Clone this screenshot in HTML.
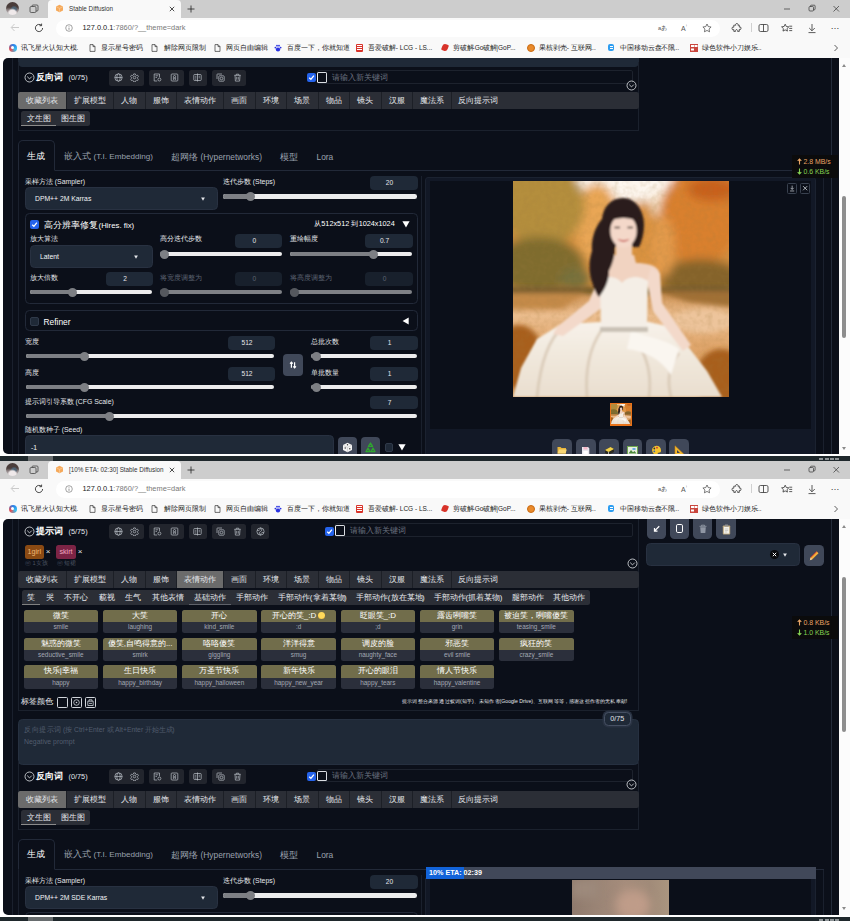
<!DOCTYPE html><html><head><meta charset="utf-8"><title>Stable Diffusion</title><style>
*{box-sizing:border-box;margin:0;padding:0}
html,body{width:850px;height:921px;overflow:hidden;background:#fff}
body{font-family:"Liberation Sans",sans-serif;color:#fff;position:relative}
.a{position:absolute}
.z{display:inline-block;text-align:justify;text-align-last:justify;text-justify:inter-character;white-space:nowrap;vertical-align:baseline}
.t{position:absolute;white-space:nowrap;line-height:1;transform:translateY(-50%)}
.c{position:absolute;white-space:nowrap;line-height:1;transform:translate(-50%,-50%)}
.win{position:absolute;left:0;width:850px}
.page{position:absolute;left:3px;width:836px;background:#0b0f19;overflow:hidden}
.bm{position:absolute;top:0;height:19px;font-size:6.5px;color:#262626;line-height:19.5px;white-space:nowrap}
.ptab{position:absolute;font-size:8px;color:#e5e7eb;text-align:center;white-space:nowrap}
.num{position:absolute;background:#1f2937;border-radius:4px;color:#e5e7eb;font-size:6.6px;text-align:center;padding-right:8.5px}
.trk{position:absolute;height:4.5px;border-radius:2.3px;background:#ececed}
.trk i{position:absolute;left:0;top:0;height:4.5px;border-radius:2.3px;background:#7d7f84}
.trk b{position:absolute;top:-2.2px;width:9px;height:9px;border-radius:4.5px;background:#7d7f84}
.trk.off{background:#7f8186}.trk.off b,.trk.off i{background:#55585e}
.lbl{position:absolute;font-size:7.8px;color:#e5e7eb;white-space:nowrap;line-height:1;transform:translateY(-50%)}
.lbl span{font-size:6.9px}
.dim{color:#5d6472}
.btn{position:absolute;background:#404859;border-radius:4px}
.card{position:absolute;width:74.5px;height:23.5px;border-radius:2.5px;overflow:hidden;background:#2b2f3b}
.card u{position:absolute;left:0;top:0;width:74.5px;height:12.5px;background:#716d4b;color:#fff;font-size:8px;line-height:12.5px;text-align:center;text-decoration:none;white-space:nowrap;overflow:hidden}
.card s{position:absolute;left:0;top:12.5px;width:74.5px;height:11px;color:#a3a8b3;font-size:6.4px;line-height:10.5px;text-align:center;text-decoration:none;white-space:nowrap}
</style></head><body><div class="win" style="top:0px;height:58px"><div class="a" style="left:0;top:0;width:850px;height:18px;background:#cdcdcd"></div><div class="a" style="left:5.5px;top:2px;width:13px;height:13px;border-radius:7px;background:radial-gradient(circle at 50% 88%,#efe9ea 0 26%,rgba(239,233,234,0) 40%),radial-gradient(circle at 62% 55%,#4f6475 0 18%,rgba(79,100,117,0) 34%),linear-gradient(#4a3d3b 0 40%,#8a7f80 60%,#d9d2d2 100%)"></div><svg class="a" style="left:29px;top:4px" width="10" height="10" viewBox="0 0 10 10"><rect x="1" y="2.500" width="6" height="6" rx="1.200" fill="none" stroke="#444" stroke-width=".8"/><path d="M3 2.500V2a1 1 0 0 1 1-1h4a1 1 0 0 1 1 1v4a1 1 0 0 1-1 1h-1" fill="none" stroke="#444" stroke-width=".8"/></svg><div class="a" style="left:48px;top:0;width:133px;height:18px;background:#f9f9f9;border-radius:4px 4px 0 0"></div><svg class="a" style="left:54.500px;top:4px" width="9" height="9" viewBox="0 0 9 9"><path d="M4.500 .8 8 2.600v3.800L4.500 8.200 1 6.400V2.600z" fill="#f5a95b"/><path d="M1 2.600 4.500 4.400 8 2.600M4.500 4.400v3.800" stroke="#fbd3a6" stroke-width=".6" fill="none"/></svg><div class="t" style="left:69px;top:8.800px;font-size:6.300px;color:#333">Stable Diffusion</div><svg class="a" style="left:169px;top:6px" width="6" height="6" viewBox="0 0 6 6"><path d="M.8.8l4.400 4.400M5.200.8.8 5.200" stroke="#222" stroke-width=".8"/></svg><svg class="a" style="left:187px;top:4.500px" width="8" height="8" viewBox="0 0 8 8"><path d="M4 .5v7M.5 4h7" stroke="#222" stroke-width=".8"/></svg><svg class="a" style="left:783px;top:4px" width="60" height="10" viewBox="0 0 60 10"><path d="M1 5h6" stroke="#333" stroke-width=".7"/><rect x="26" y="2.500" width="4.500" height="4.500" rx="1" fill="none" stroke="#333" stroke-width=".7"/><path d="M27.500 2.500V2a.8.8 0 0 1 .8-.8h3a.8.8 0 0 1 .8.8v3a.8.8 0 0 1-.8.8h-.8" fill="none" stroke="#333" stroke-width=".7"/><path d="M50.500 2l5.500 5.500M56 2l-5.500 5.500" stroke="#333" stroke-width=".7"/></svg><div class="a" style="left:0;top:18px;width:850px;height:20px;background:#f9f9f9"></div><svg class="a" style="left:10px;top:23px" width="10" height="9" viewBox="0 0 10 9"><path d="M9 4.500H1.500M4.500 1 1.200 4.500 4.500 8" fill="none" stroke="#c4c4c4" stroke-width=".9"/></svg><svg class="a" style="left:34px;top:22.500px" width="10" height="10" viewBox="0 0 10 10"><path d="M8.600 5A3.600 3.600 0 1 1 7.400 2.300" fill="none" stroke="#333" stroke-width=".9"/><path d="M7.600.6v2.100H5.500" fill="none" stroke="#333" stroke-width=".9"/></svg><div class="a" style="left:56px;top:19.500px;width:664px;height:17.500px;background:#fff;border-radius:8.700px"></div><svg class="a" style="left:65px;top:24px" width="8" height="8" viewBox="0 0 8 8"><circle cx="4" cy="4" r="3.300" fill="none" stroke="#666" stroke-width=".6"/><path d="M4 3.600v2.200M4 2.200v.6" stroke="#666" stroke-width=".7"/></svg><div class="t" style="left:82.500px;top:28.300px;font-size:7.400px;color:#222">127.0.0.1<span style="color:#777">:7860/?__theme=dark</span></div><div class="t" style="left:658px;top:28.500px;font-size:5.600px;color:#555">a<span class="z" style="width:1em">あ</span></div><div class="t" style="left:681px;top:28px;font-size:7px;color:#555">A<span style="font-size:4px;vertical-align:top">⁾</span></div><svg class="a" style="left:701.500px;top:23px" width="10" height="10" viewBox="0 0 10 10"><path d="M5 1l1.250 2.600 2.850.4-2.050 2 .5 2.800L5 7.450 2.450 8.800l.5-2.800L.9 4l2.850-.4z" fill="none" stroke="#444" stroke-width=".7" stroke-linejoin="round"/></svg><svg class="a" style="left:731px;top:22.500px" width="11" height="11" viewBox="0 0 11 11"><path d="M3.600 2.200h1.200a1.200 1.200 0 1 1 2.100 0h1.400v1.900a1.250 1.250 0 1 1 0 2.300v2H6.600a1.200 1.200 0 1 0-2.100 0H2.800V6.600a1.300 1.300 0 1 1 0-2.400V2.200z" fill="none" stroke="#333" stroke-width=".8"/></svg><div class="a" style="left:750.500px;top:23px;width:1px;height:9px;background:#d0d0d0"></div><svg class="a" style="left:757.500px;top:23px" width="11" height="10" viewBox="0 0 11 10"><rect x="1" y="1.500" width="9" height="7" rx="1.400" fill="none" stroke="#333" stroke-width=".8"/><path d="M5.500 1.500v7" stroke="#333" stroke-width=".8"/></svg><svg class="a" style="left:781px;top:22.500px" width="12" height="11" viewBox="0 0 12 11"><path d="M4.200 1.200l1.100 2.300 2.500.35-1.800 1.750.4 2.500-2.200-1.200L2 8.100l.4-2.500L.6 3.850l2.500-.35z" fill="none" stroke="#333" stroke-width=".8" stroke-linejoin="round"/><path d="M8.200 3.200h3M8.200 5.400h3M8.200 7.600h3" stroke="#333" stroke-width=".8"/></svg><svg class="a" style="left:807px;top:22.500px" width="10" height="11" viewBox="0 0 10 11"><path d="M5 1v6.500M2.200 5 5 7.800 7.800 5M1.500 9.600h7" fill="none" stroke="#333" stroke-width=".8"/></svg><div class="t" style="left:830.500px;top:25.500px;font-size:9px;color:#333;letter-spacing:.2px">…</div><div class="a" style="left:0;top:38px;width:850px;height:20px;background:#f9f9f9"></div><div class="a" style="left:0;top:38px;width:850px;height:19px"><div class="a" style="left:8.500px;top:5.500px;width:8px;height:8px;border-radius:4px;background:conic-gradient(#2b7de9,#35c1f1,#e94f4f,#2b7de9)"></div><div class="a" style="left:11px;top:8px;width:3px;height:3px;border-radius:2px;background:#fff"></div><div class="bm" style="left:21px"><span class="z" style="width:8em">讯飞星火认知大模</span>...</div><svg class="a" style="left:89px;top:5.500px" width="7" height="8" viewBox="0 0 7 8"><path d="M1 .6h3l2 2v4.800H1z" fill="none" stroke="#333" stroke-width=".7"/><path d="M4 .6v2h2" fill="none" stroke="#333" stroke-width=".7"/></svg><div class="bm" style="left:101px"><span class="z" style="width:6em">显示星号密码</span></div><svg class="a" style="left:151px;top:5.500px" width="7" height="8" viewBox="0 0 7 8"><path d="M1 .6h3l2 2v4.800H1z" fill="none" stroke="#333" stroke-width=".7"/><path d="M4 .6v2h2" fill="none" stroke="#333" stroke-width=".7"/></svg><div class="bm" style="left:163.500px"><span class="z" style="width:6em">解除网页限制</span></div><svg class="a" style="left:213.5px;top:5.500px" width="7" height="8" viewBox="0 0 7 8"><path d="M1 .6h3l2 2v4.800H1z" fill="none" stroke="#333" stroke-width=".7"/><path d="M4 .6v2h2" fill="none" stroke="#333" stroke-width=".7"/></svg><div class="bm" style="left:225.500px"><span class="z" style="width:6em">网页自由编辑</span></div><svg class="a" style="left:274px;top:5.500px" width="8" height="8" viewBox="0 0 8 8"><ellipse cx="4" cy="5.500" rx="2.200" ry="1.900" fill="#2932e1"/><circle cx="1.400" cy="3.600" r=".9" fill="#2932e1"/><circle cx="3" cy="1.700" r=".9" fill="#2932e1"/><circle cx="5" cy="1.700" r=".9" fill="#2932e1"/><circle cx="6.600" cy="3.600" r=".9" fill="#2932e1"/></svg><div class="bm" style="left:287px"><span class="z" style="width:9em">百度一下，你就知道</span></div><div class="a" style="left:355.500px;top:5.500px;width:7.500px;height:8px;background:#d8332a;border-radius:1px"></div><div class="a" style="left:357px;top:7px;width:4.500px;height:1px;background:#fff;box-shadow:0 2px #fff,0 4px #fff"></div><div class="bm" style="left:368px"><span class="z" style="width:4em">吾爱破解</span> - LCG - LS...</div><div class="a" style="left:441.500px;top:6px;width:6px;height:7px;background:#d8332a;border-radius:3px 1px 3px 1px;transform:rotate(20deg)"></div><div class="bm" style="left:453px"><span class="z" style="width:3em">剪破解</span>-Go<span class="z" style="width:2em">破解</span>|GoP...</div><div class="a" style="left:526.500px;top:5.500px;width:8px;height:8px;border-radius:4px;background:#e98a2b;border:1px solid #c86a12"></div><div class="bm" style="left:539px"><span class="z" style="width:4em">果核剥壳</span> - <span class="z" style="width:3em">互联网</span>...</div><div class="a" style="left:608px;top:6px;width:6px;height:7px;border-radius:2px;background:#2d9df0"></div><div class="a" style="left:609.500px;top:8px;width:3px;height:1px;background:#fff;box-shadow:0 2px #fff"></div><div class="bm" style="left:619.500px"><span class="z" style="width:6em">中国移动云盘</span>-<span class="z" style="width:2em">不限</span>...</div><div class="a" style="left:690px;top:5.500px;width:8px;height:8px;background:#c9463d"></div><div class="a" style="left:691px;top:6.500px;width:2.500px;height:2.500px;background:#fff;box-shadow:3.500px 0 #fff,0 3.500px #fff"></div><div class="bm" style="left:702px"><span class="z" style="width:4em">绿色软件</span>-<span class="z" style="width:4em">小刀娱乐</span>...</div><svg class="a" style="left:833px;top:5.500px" width="6" height="8" viewBox="0 0 6 8"><path d="M1.500 1 4.500 4 1.500 7" fill="none" stroke="#333" stroke-width=".8"/></svg></div></div><div class="page" style="top:57.7px;height:396px;border-radius:5px 0 0 5px"><div class="a" style="left:8.5px;top:-0.7px;width:1.0px;height:397px;background:#1a202d"></div><div class="a" style="left:820px;top:113.3px;width:1px;height:283px;background:#1a202d"></div><div class="a" style="left:15px;top:113.3px;width:1px;height:283px;background:#1a202d"></div><div class="a" style="left:827.5px;top:-0.7px;width:1.0px;height:397px;background:#232b3a"></div><div class="a" style="left:15px;top:-7.7px;width:621px;height:16.5px;background:#1f2937;border-radius:4.500px"></div><div class="a" style="left:15px;top:4.3px;width:621px;height:69px;border:1px solid #1b212d;border-top:none"></div><svg class="a" style="left:21.0px;top:14.8px" width="11" height="11" viewBox="0 0 11 11"><circle cx="5.500" cy="5.500" r="4.500" fill="none" stroke="#e5e7eb" stroke-width=".8"/><path d="M3.200 4.600 5.500 6.900 7.800 4.600" fill="none" stroke="#e5e7eb" stroke-width=".8"/></svg><div class="t" style="left:32.8px;top:20.6px;font-size:9.200px;font-weight:bold;color:#fff"><span class="z" style="width:3em">反向词</span></div><div class="t" style="left:65.5px;top:20.6px;font-size:7.300px;color:#e5e7eb">(0/75)</div><div class="a" style="left:106px;top:12.6px;width:35px;height:15.5px;background:#22252d;border-radius:2.500px"></div><div class="a" style="left:145.5px;top:12.6px;width:35.5px;height:15.5px;background:#22252d;border-radius:2.500px"></div><div class="a" style="left:185.5px;top:12.6px;width:18.0px;height:15.5px;background:#22252d;border-radius:2.500px"></div><div class="a" style="left:208.5px;top:12.6px;width:34.5px;height:15.5px;background:#22252d;border-radius:2.500px"></div><svg class="a" style="left:110.8px;top:15.8px" width="9" height="9" viewBox="0 0 9 9"><circle cx="4.500" cy="4.500" r="3.700" stroke="#bcc1c9" stroke-width=".7" fill="none"/><ellipse cx="4.500" cy="4.500" rx="1.700" ry="3.700" stroke="#bcc1c9" stroke-width=".7" fill="none"/><path d="M.8 4.500h7.400" stroke="#bcc1c9" stroke-width=".7" fill="none"/></svg><svg class="a" style="left:127.2px;top:15.8px" width="9" height="9" viewBox="0 0 9 9"><circle cx="4.500" cy="4.500" r="1.300" stroke="#bcc1c9" stroke-width=".7" fill="none"/><path d="M3.700.9h1.600l.3 1.100.9.500 1.100-.3.800 1.400-.8.800v1l.8.800-.8 1.400-1.100-.3-.9.500-.3 1.100H3.700l-.3-1.100-.9-.5-1.100.3-.8-1.400.8-.8v-1l-.8-.8.8-1.400 1.100.3.900-.5z" stroke="#bcc1c9" stroke-width=".7" fill="none"/></svg><svg class="a" style="left:150.2px;top:15.8px" width="9" height="9" viewBox="0 0 9 9"><path d="M1.200 1h5.300v3.200M1.200 1v7h3" stroke="#bcc1c9" stroke-width=".7" fill="none"/><path d="M2.500 2.800h2.700M2.500 4.400h1.500" stroke="#bcc1c9" stroke-width=".7" fill="none"/><circle cx="6.400" cy="6.500" r="1.500" stroke="#bcc1c9" stroke-width=".7" fill="none"/></svg><svg class="a" style="left:166.8px;top:15.8px" width="9" height="9" viewBox="0 0 9 9"><rect x="1.200" y="1" width="6.600" height="7" rx=".8" stroke="#bcc1c9" stroke-width=".7" fill="none"/><circle cx="4.500" cy="3.600" r="1.100" stroke="#bcc1c9" stroke-width=".7" fill="none"/><path d="M3.400 4.500v2l1.100-.7 1.100.7v-2" stroke="#bcc1c9" stroke-width=".7" fill="none"/></svg><svg class="a" style="left:190.0px;top:15.8px" width="9" height="9" viewBox="0 0 9 9"><rect x=".8" y="1.500" width="7.400" height="6" rx=".7" stroke="#bcc1c9" stroke-width=".7" fill="none"/><path d="M4.500.5v8M2.200 3.300h1.100M2.200 4.800h1.100M2.200 6.200h1.100M5.700 3.300h1.100M5.700 4.800h1.100" stroke="#bcc1c9" stroke-width=".7" fill="none"/></svg><svg class="a" style="left:212.8px;top:15.8px" width="9" height="9" viewBox="0 0 9 9"><rect x="2.800" y="2.800" width="5.400" height="5.400" rx=".8" stroke="#bcc1c9" stroke-width=".7" fill="none"/><path d="M1 6V1.600A.6.600 0 0 1 1.600 1H6" stroke="#bcc1c9" stroke-width=".7" fill="none"/><circle cx="5.500" cy="5.500" r="1.300" stroke="#bcc1c9" stroke-width=".7" fill="none"/></svg><svg class="a" style="left:229.8px;top:15.8px" width="9" height="9" viewBox="0 0 9 9"><path d="M1.300 2.300h6.400M3.300 2.300V1.200h2.400v1.100M2 2.300l.4 5.800h4.200L7 2.300M3.700 3.800v2.900M5.300 3.800v2.900" stroke="#bcc1c9" stroke-width=".7" fill="none"/></svg><div class="a" style="left:313.5px;top:12.3px;width:316.5px;height:13.6px;border:1px solid #1d222d;border-radius:2px"></div><div class="a" style="left:303.5px;top:15.5px;width:9.0px;height:9.0px;border-radius:2px;background:#2563eb"></div><svg class="a" style="left:303.5px;top:15.5px" width="9" height="9" viewBox="0 0 9 9"><path d="M2.200 4.700 3.900 6.300l3-3.700" fill="none" stroke="#fff" stroke-width="1.300"/></svg><div class="a" style="left:314.1px;top:14.3px;width:10.4px;height:10.8px;border:1px solid #d9dce1;border-left:1.800px solid #f3f4f6;border-radius:1.500px"></div><div class="t" style="left:328.5px;top:20.0px;font-size:7.850px;color:#6b7280"><span class="z" style="width:7em">请输入新关键词</span></div><svg class="a" style="left:623.1px;top:22.6px" width="11" height="11" viewBox="0 0 11 11"><circle cx="5.500" cy="5.500" r="4.500" fill="none" stroke="#e5e7eb" stroke-width=".8"/><path d="M3.200 4.600 5.500 6.900 7.800 4.600" fill="none" stroke="#e5e7eb" stroke-width=".8"/></svg><div class="a" style="left:15px;top:34.5px;width:621px;height:17.0px;background:#2b2e36;border-radius:2.500px"></div><div class="ptab" style="left:15px;top:34.5px;width:47.5px;height:17px;line-height:17.500px;background:#6b6b6b;border-radius:2.500px 0 0 2.500px;"><span class="z" style="width:4em">收藏列表</span></div><div class="ptab" style="left:62.5px;top:34.5px;width:47.5px;height:17px;line-height:17.500px;border-left:1px solid #1c1f26;"><span class="z" style="width:4em">扩展模型</span></div><div class="ptab" style="left:110px;top:34.5px;width:31.5px;height:17px;line-height:17.500px;border-left:1px solid #1c1f26;"><span class="z" style="width:2em">人物</span></div><div class="ptab" style="left:141.5px;top:34.5px;width:31.5px;height:17px;line-height:17.500px;border-left:1px solid #1c1f26;"><span class="z" style="width:2em">服饰</span></div><div class="ptab" style="left:173px;top:34.5px;width:47px;height:17px;line-height:17.500px;border-left:1px solid #1c1f26;"><span class="z" style="width:4em">表情动作</span></div><div class="ptab" style="left:220px;top:34.5px;width:31.5px;height:17px;line-height:17.500px;border-left:1px solid #1c1f26;"><span class="z" style="width:2em">画面</span></div><div class="ptab" style="left:251.5px;top:34.5px;width:31.5px;height:17px;line-height:17.500px;border-left:1px solid #1c1f26;"><span class="z" style="width:2em">环境</span></div><div class="ptab" style="left:283px;top:34.5px;width:31.5px;height:17px;line-height:17.500px;border-left:1px solid #1c1f26;"><span class="z" style="width:2em">场景</span></div><div class="ptab" style="left:314.5px;top:34.5px;width:31.5px;height:17px;line-height:17.500px;border-left:1px solid #1c1f26;"><span class="z" style="width:2em">物品</span></div><div class="ptab" style="left:346px;top:34.5px;width:31.5px;height:17px;line-height:17.500px;border-left:1px solid #1c1f26;"><span class="z" style="width:2em">镜头</span></div><div class="ptab" style="left:377.5px;top:34.5px;width:31.5px;height:17px;line-height:17.500px;border-left:1px solid #1c1f26;"><span class="z" style="width:2em">汉服</span></div><div class="ptab" style="left:409px;top:34.5px;width:39px;height:17px;line-height:17.500px;border-left:1px solid #1c1f26;"><span class="z" style="width:3em">魔法系</span></div><div class="ptab" style="left:448px;top:34.5px;width:52px;height:17px;line-height:17.500px;border-left:1px solid #1c1f26;"><span class="z" style="width:5em">反向提示词</span></div><div class="a" style="left:18px;top:53.3px;width:69px;height:15.5px;background:#2b2e36;border-radius:2.500px"></div><div class="a" style="left:18px;top:67.8px;width:34.5px;height:1.0px;background:#8b8b8b"></div><div class="c" style="left:35.5px;top:61.3px;font-size:7.800px;color:#e5e7eb"><span class="z" style="width:3em">文生图</span></div><div class="c" style="left:70px;top:61.3px;font-size:7.800px;color:#e5e7eb"><span class="z" style="width:3em">图生图</span></div><div class="a" style="left:15px;top:112.5px;width:805.5px;height:1.0px;background:#222938"></div><div class="a" style="left:15px;top:82.8px;width:36.5px;height:30.7px;border:1px solid #222938;border-bottom:1px solid #0b0f19;border-radius:5px 5px 0 0;background:#0b0f19"></div><div class="t" style="left:24px;top:99.0px;font-size:9.200px;color:#fff"><span class="z" style="width:2em">生成</span></div><div class="t" style="left:61px;top:99.0px;font-size:9px;color:#9aa1ad"><span class="z" style="width:3em">嵌入式</span> <span style="font-size:8.100px">(T.I. Embedding)</span></div><div class="t" style="left:168px;top:99.0px;font-size:9px;color:#9aa1ad"><span class="z" style="width:3em">超网络</span> <span style="font-size:8.400px">(Hypernetworks)</span></div><div class="t" style="left:277px;top:99.0px;font-size:9px;color:#9aa1ad"><span class="z" style="width:2em">模型</span></div><div class="t" style="left:313.5px;top:99.0px;font-size:9px;color:#9aa1ad"><span style="font-size:8.400px">Lora</span></div><div class="a" style="left:418px;top:118.3px;width:1px;height:278px;background:#1a202d"></div><div class="lbl" style="left:22px;top:124.8px"><span class="z" style="width:4em">采样方法</span> <span>(Sampler)</span></div><div class="a" style="left:22px;top:129.8px;width:193px;height:23.0px;background:#1f2937;border-radius:4.500px;border:1px solid #283141"></div><div class="t" style="left:32px;top:141.6px;font-size:6.800px;color:#f3f4f6">DPM++ 2M Karras</div><svg class="a" style="left:194px;top:135.6px" width="12" height="12" viewBox="0 0 12 12"><polygon points="4.10,4.57 7.90,4.57 6.00,7.81" fill="#e5e7eb"/></svg><div class="lbl" style="left:220px;top:124.8px"><span class="z" style="width:4em">迭代步数</span> <span>(Steps)</span></div><div class="num" style="left:367px;top:118.3px;width:47.5px;height:14px;line-height:14.6px;">20</div><div class="trk" style="left:220px;top:136.75px;width:193.5px"><i style="width:27px"></i><b style="left:22.5px"></b></div><div class="a" style="left:22px;top:155.3px;width:392.5px;height:90.7px;border:1px solid #222938;border-radius:4.500px"></div><div class="a" style="left:27px;top:162.8px;width:9px;height:9.0px;border-radius:2px;background:#2563eb"></div><svg class="a" style="left:27px;top:162.8px" width="9" height="9" viewBox="0 0 9 9"><path d="M2.200 4.700 3.900 6.300l3-3.700" fill="none" stroke="#fff" stroke-width="1.300"/></svg><div class="t" style="left:41px;top:167.6px;font-size:8.700px;color:#fff"><span class="z" style="width:6em">高分辨率修复</span> <span style="font-size:7.800px">(Hires. fix)</span></div><div class="t" style="left:311px;top:166.1px;font-size:7.300px;color:#fff"><span class="z" style="width:1em">从</span>512x512 <span class="z" style="width:1em">到</span>1024x1024</div><svg class="a" style="left:396.5px;top:160.3px" width="12" height="12" viewBox="0 0 12 12"><polygon points="2.40,3.30 9.60,3.30 6.00,9.42" fill="#fff"/></svg><div class="lbl" style="left:27px;top:181.8px"><span class="z" style="width:4em">放大算法</span></div><div class="a" style="left:27px;top:187.3px;width:122.5px;height:23px;background:#1f2937;border-radius:4.500px;border:1px solid #283141"></div><div class="t" style="left:37px;top:199.1px;font-size:6.800px;color:#f3f4f6">Latent</div><svg class="a" style="left:127px;top:193.1px" width="12" height="12" viewBox="0 0 12 12"><polygon points="4.10,4.57 7.90,4.57 6.00,7.81" fill="#e5e7eb"/></svg><div class="lbl" style="left:157px;top:181.8px"><span class="z" style="width:6em">高分迭代步数</span></div><div class="num" style="left:232px;top:176.8px;width:47px;height:13.5px;line-height:14.1px;">0</div><div class="trk" style="left:157px;top:194.25px;width:121.5px"><i style="width:4px"></i><b style="left:-0.5px"></b></div><div class="lbl" style="left:287px;top:181.8px"><span class="z" style="width:4em">重绘幅度</span></div><div class="num" style="left:362px;top:176.8px;width:47.5px;height:13.5px;line-height:14.1px;">0.7</div><div class="trk" style="left:287px;top:194.25px;width:121.5px"><i style="width:83.7px"></i><b style="left:79.2px"></b></div><div class="lbl" style="left:27px;top:220.3px"><span class="z" style="width:4em">放大倍数</span></div><div class="num" style="left:103px;top:214.8px;width:46.5px;height:13.5px;line-height:14.1px;">2</div><div class="trk" style="left:27px;top:232.05px;width:122px"><i style="width:42px"></i><b style="left:37.5px"></b></div><div class="lbl dim" style="left:157px;top:220.3px"><span class="z" style="width:6em">将宽度调整为</span></div><div class="num" style="left:232px;top:214.8px;width:47px;height:13.5px;line-height:14.1px;background:#18202c;color:#5d6472;">0</div><div class="trk off" style="left:157px;top:232.05px;width:121.5px"><i style="width:4px"></i><b style="left:-0.5px"></b></div><div class="lbl dim" style="left:287px;top:220.3px"><span class="z" style="width:6em">将高度调整为</span></div><div class="num" style="left:362px;top:214.8px;width:47.5px;height:13.5px;line-height:14.1px;background:#18202c;color:#5d6472;">0</div><div class="trk off" style="left:287px;top:232.05px;width:121.5px"><i style="width:4px"></i><b style="left:-0.5px"></b></div><div class="a" style="left:22px;top:252.3px;width:392.5px;height:21.5px;border:1px solid #222938;border-radius:4.500px"></div><div class="a" style="left:27px;top:259.3px;width:9px;height:9px;border-radius:2px;background:#1f2937;border:1px solid #303a4a"></div><div class="t" style="left:40.5px;top:264.0px;font-size:8.400px;color:#fff">Refiner</div><svg class="a" style="left:396.5px;top:257.6px" width="12" height="12" viewBox="0 0 12 12"><polygon points="8.70,2.40 8.70,9.60 2.58,6.00" fill="#fff"/></svg><div class="lbl" style="left:22px;top:284.3px"><span class="z" style="width:2em">宽度</span></div><div class="num" style="left:225px;top:278.8px;width:46.5px;height:13.5px;line-height:14.1px;">512</div><div class="trk" style="left:22.5px;top:296.05px;width:248.5px"><i style="width:59.0px"></i><b style="left:54.5px"></b></div><div class="lbl" style="left:22px;top:315.0px"><span class="z" style="width:2em">高度</span></div><div class="num" style="left:225px;top:309.3px;width:46.5px;height:13.7px;line-height:14.299999999999999px;">512</div><div class="trk" style="left:22.5px;top:327.05px;width:248.5px"><i style="width:59.0px"></i><b style="left:54.5px"></b></div><div class="a" style="left:280px;top:296.8px;width:20px;height:21.5px;background:#404859;border-radius:4px"></div><svg class="a" style="left:286px;top:303.6px" width="8" height="8" viewBox="0 0 10 10"><path d="M3 8.500V1.500M1.300 3.300 3 1.500l1.700 1.800M7 1.500v7M5.300 6.700 7 8.500l1.700-1.800" fill="none" stroke="#fff" stroke-width="1.500"/></svg><div class="lbl" style="left:308px;top:284.3px"><span class="z" style="width:4em">总批次数</span></div><div class="num" style="left:367px;top:278.8px;width:47.5px;height:13.5px;line-height:14.1px;">1</div><div class="trk" style="left:308px;top:296.05px;width:105.5px"><i style="width:5px"></i><b style="left:0.5px"></b></div><div class="lbl" style="left:308px;top:315.0px"><span class="z" style="width:4em">单批数量</span></div><div class="num" style="left:367px;top:309.3px;width:47.5px;height:13.7px;line-height:14.299999999999999px;">1</div><div class="trk" style="left:308px;top:327.05px;width:105.5px"><i style="width:5px"></i><b style="left:0.5px"></b></div><div class="lbl" style="left:22px;top:344.0px"><span class="z" style="width:7em">提示词引导系数</span> <span>(CFG Scale)</span></div><div class="num" style="left:367px;top:338.0px;width:47.5px;height:13.8px;line-height:14.4px;">7</div><div class="trk" style="left:22.5px;top:356.25px;width:391.0px"><i style="width:83.5px"></i><b style="left:79.0px"></b></div><div class="lbl" style="left:22px;top:372.8px"><span class="z" style="width:5em">随机数种子</span> <span>(Seed)</span></div><div class="a" style="left:22px;top:377.8px;width:308.7px;height:26.5px;background:#1f2937;border-radius:4.500px;border:1px solid #283141"></div><div class="t" style="left:28px;top:390.0px;font-size:6.800px;color:#f3f4f6">-1</div><div class="a" style="left:334.5px;top:379.3px;width:19.5px;height:25px;background:#404859;border-radius:4px"></div><div class="a" style="left:357.7px;top:379.3px;width:19.3px;height:25px;background:#404859;border-radius:4px"></div><svg class="a" style="left:339px;top:384.3px" width="11" height="11" viewBox="0 0 11 11"><path d="M5.500.8 10 3.100v4.800L5.500 10.200 1 7.900V3.100z" fill="#f4f4f4"/><path d="M1 3.100 5.500 5.400 10 3.100M5.500 5.400v4.800" stroke="#bbb" stroke-width=".5" fill="none"/><circle cx="3.200" cy="6" r=".7" fill="#333"/><circle cx="7.800" cy="6.800" r=".7" fill="#333"/><circle cx="5.500" cy="2.800" r=".7" fill="#333"/></svg><svg class="a" style="left:362px;top:384.3px" width="11" height="11" viewBox="0 0 11 11"><path d="M5.500 1 7.600 4.400H3.400zM1 9.500l2-3.500 2 3.500zM10 9.500H6l2-3.500z" fill="none" stroke="#2fa52f" stroke-width="1.300" stroke-linejoin="round"/></svg><div class="a" style="left:381.5px;top:385.3px;width:8.5px;height:9px;border-radius:2px;background:#1f2937;border:1px solid #303a4a"></div><svg class="a" style="left:392.5px;top:383.8px" width="12" height="12" viewBox="0 0 12 12"><polygon points="2.40,3.30 9.60,3.30 6.00,9.42" fill="#fff"/></svg><div class="a" style="left:422px;top:119.3px;width:391px;height:283px;background:#121826;border:1px solid #1b2230;border-radius:3px 3px 0 0"></div><div class="a" style="left:427px;top:123.0px;width:381px;height:248.3px;background:#0b0f19"></div><div class="a" style="left:783.5px;top:125.5px;width:10.3px;height:10.4px;border:1px solid #39414f;border-radius:1.500px"></div><div class="a" style="left:796.5px;top:125.5px;width:10.3px;height:10.4px;border:1px solid #39414f;border-radius:1.500px"></div><svg class="a" style="left:783.5px;top:125.5px" width="10.3" height="10.4" viewBox="0 0 10 10"><path d="M5 2.500v3.600M3.500 4.700 5 6.200 6.500 4.700M3 7.700h4" fill="none" stroke="#d1d5db" stroke-width=".7"/></svg><svg class="a" style="left:796.5px;top:125.5px" width="10.3" height="10.4" viewBox="0 0 10 10"><path d="M3 3l4 4M7 3 3 7" fill="none" stroke="#d1d5db" stroke-width=".8"/></svg><svg class="a" style="left:510.2px;top:123.3px" width="216" height="216" viewBox="0 0 216 216"><defs><filter id="b6" x="-20%" y="-20%" width="140%" height="140%"><feGaussianBlur stdDeviation="5"/></filter><filter id="b3" x="-20%" y="-20%" width="140%" height="140%"><feGaussianBlur stdDeviation="2.5"/></filter><filter id="b1" x="-10%" y="-10%" width="120%" height="120%"><feGaussianBlur stdDeviation=".8"/></filter><filter id="nz" x="0" y="0" width="100%" height="100%"><feTurbulence type="fractalNoise" baseFrequency=".18" numOctaves="2" seed="4"/><feColorMatrix values="0 0 0 0 .35  0 0 0 0 .2  0 0 0 0 .05  .9 .9 0 0 -.75"/></filter><clipPath id="pc"><rect width="216" height="216"/></clipPath><linearGradient id="gr" x1="0" y1="0" x2="0" y2="1"><stop offset="0" stop-color="#d09456"/><stop offset=".22" stop-color="#ebbd8e"/><stop offset=".5" stop-color="#e0a66c"/><stop offset="1" stop-color="#cf9150"/></linearGradient><linearGradient id="sk" x1="0" y1="0" x2="0" y2="1"><stop offset="0" stop-color="#f7f2ea"/><stop offset=".5" stop-color="#f0e7db"/><stop offset="1" stop-color="#e9decf"/></linearGradient></defs>
<g id="ph" clip-path="url(#pc)">
<rect width="216" height="216" fill="#d9923f"/>
<g filter="url(#b6)">
<rect x="-10" y="-10" width="236" height="130" fill="#d9923f"/>
<ellipse cx="112" cy="2" rx="52" ry="20" fill="#fdf6ee"/>
<ellipse cx="152" cy="24" rx="14" ry="14" fill="#f5e2c8"/>
<ellipse cx="84" cy="42" rx="22" ry="40" fill="#e9a654"/>
<ellipse cx="30" cy="24" rx="42" ry="42" fill="#b48e3c"/>
<ellipse cx="26" cy="84" rx="46" ry="28" fill="#7f6c2e"/>
<ellipse cx="62" cy="98" rx="16" ry="12" fill="#76703a"/>
<ellipse cx="186" cy="36" rx="40" ry="48" fill="#d9802d"/>
<ellipse cx="200" cy="8" rx="26" ry="12" fill="#c8611d"/>
<ellipse cx="188" cy="98" rx="42" ry="20" fill="#85642c"/>
<ellipse cx="150" cy="66" rx="12" ry="30" fill="#e29a4b"/>
</g>
<rect x="0" y="112" width="216" height="104" fill="url(#gr)"/>
<g filter="url(#b3)">
<rect x="-5" y="106" width="226" height="7" fill="#6e582a"/>
<path d="M-5 112h78l-24 16H-5z" fill="#c48a4a"/>
<path d="M140 110h80v16l-44-5z" fill="#a06f34"/>
<ellipse cx="6" cy="176" rx="24" ry="32" fill="#a85f1c"/>
<ellipse cx="208" cy="198" rx="26" ry="30" fill="#a85f1c"/>
<ellipse cx="190" cy="140" rx="30" ry="12" fill="#edc49b"/>
</g>
<rect width="216" height="216" filter="url(#nz)" opacity=".28"/>
<g filter="url(#b1)">
<path d="M0 216 8 187 24 158 48 143 88 141 136 141 158 146 177 168 194 190 209 216z" fill="url(#sk)"/>
<path d="M50 146c-12 10-22 30-26 70M88 150c-12 18-16 40-14 66M128 168c8 14 10 32 8 48M166 172c-10 12-12 28-8 44" stroke="#d6c6b2" stroke-width="3" fill="none" opacity=".75"/>
<path d="M118 150c16 6 34 8 48 18l-8 26c-10-16-26-24-44-26z" fill="#faf6f0"/>
<path d="M97 74h24l2 8c10 0 20 2 23 8l-2 12-48 2-12-8c2-8 6-12 14-14z" fill="#f1d3c1"/>
<path d="M88 92 76 120 44 146 40 153 50 155 90 126 96 100z" fill="#f3d9ca"/>
<path d="M138 86 147 92 149 122 178 164 170 170 140 130 134 100z" fill="#f3d9ca"/>
<path d="M87 100c8-6 16-5 22 2 6-7 16-8 26-2l-1 48H88z" fill="#f4eee6"/>
<path d="M87 146h48v5H87z" fill="#c9c1b5"/>
<path d="M110 17c-12 0-20 9-21 21-7 8-11 20-10 32-4 12-3 24 1 34 2 6 4 10 6 12 6-8 10-16 10-26 4-8 6-16 6-24h24c3-6 5-14 5-22 0-14-8-27-21-27z" fill="#2b1d1a"/>
<path d="M103 60h16v18h-16z" fill="#f1d3c1"/>
<ellipse cx="110.500" cy="50" rx="13.200" ry="16.500" fill="#f4d8c9"/>
<path d="M96.500 40c-3-16 31-16 28 0-9-4-19-4-28 0z" fill="#2b1d1a"/>
<path d="M123.500 38c3 6 3 14 .5 22 5-4 7-14 5-24z" fill="#2b1d1a"/>
<path d="M104.500 58c3 3.500 9 3.500 12 0-4 1.500-8 1.500-12 0z" fill="#c5544f"/>
<path d="M101.500 46.500h5.500M114.500 46.500h5.500" stroke="#3a2a26" stroke-width="1.500"/>
</g>
</g></svg><div class="a" style="left:606.6px;top:345.3px;width:22.8px;height:23px;background:#e8731a"></div><svg class="a" style="left:608.1px;top:346.8px" width="19.8" height="20" viewBox="0 0 216 216" preserveAspectRatio="none"><use href="#ph"/></svg><div class="a" style="left:549.4px;top:380.9px;width:19.8px;height:23.4px;background:#404859;border-radius:4.500px"></div><div class="a" style="left:572.8px;top:380.9px;width:19.8px;height:23.4px;background:#404859;border-radius:4.500px"></div><div class="a" style="left:596.2px;top:380.9px;width:19.8px;height:23.4px;background:#404859;border-radius:4.500px"></div><div class="a" style="left:619.6px;top:380.9px;width:19.8px;height:23.4px;background:#404859;border-radius:4.500px"></div><div class="a" style="left:643px;top:380.9px;width:19.8px;height:23.4px;background:#404859;border-radius:4.500px"></div><div class="a" style="left:666.4px;top:380.9px;width:19.8px;height:23.4px;background:#404859;border-radius:4.500px"></div><svg class="a" style="left:554.4px;top:388.8px" width="10" height="8" viewBox="0 0 10 8"><path d="M.5 1h3l1 1h4.500v5.500H.5z" fill="#e8b53a"/><path d="M.5 7.500 2 3.500h7.800L8.500 7.500z" fill="#f7d774"/></svg><svg class="a" style="left:578.3px;top:388.3px" width="9" height="9" viewBox="0 0 9 9"><path d="M1 1h6l1.300 1.300V8.500H1z" fill="#e8e8ee"/><rect x="2.500" y="1" width="4" height="2.500" fill="#f4b8c8"/><rect x="2.300" y="5" width="4.500" height="3.500" fill="#fff"/></svg><svg class="a" style="left:600.7px;top:388.3px" width="11" height="9" viewBox="0 0 11 9"><path d="M1 4 6.500 1l3.500 2v3L4.500 9 1 7z" fill="#2a2a22"/><path d="M1 4 6.500 1l3.500 2L4.500 6z" fill="#f2d24b"/><path d="M4.500 6v3" stroke="#fff" stroke-width=".6"/></svg><svg class="a" style="left:624.1px;top:388.8px" width="11" height="9" viewBox="0 0 11 9"><rect x=".5" y=".5" width="10" height="8" fill="#e8efe0" stroke="#6fa84e" stroke-width="1"/><path d="M1.500 7.500 4 4l2 2.200L7.500 5l2 2.500z" fill="#4c8a3a"/><rect x="5.500" y="2" width="3" height="2" fill="#6aa9e0"/></svg><svg class="a" style="left:647.5px;top:387.8px" width="11" height="10" viewBox="0 0 11 10"><path d="M5.500.8a4.700 4.500 0 1 0 .6 9c1-.2.300-1.400.9-2s2.600.4 3-1.600C10.400 3 8.300.8 5.500.8z" fill="#f4c430"/><circle cx="3.300" cy="3.500" r=".9" fill="#333"/><circle cx="6" cy="2.700" r=".9" fill="#c33"/><circle cx="3.300" cy="6.300" r=".9" fill="#36a"/></svg><svg class="a" style="left:671.4px;top:387.8px" width="11" height="10" viewBox="0 0 11 10"><path d="M1 .8 10.200 9.500H1z" fill="#f4b92e" stroke="#c98412" stroke-width=".6"/><path d="M3 5 6 8H3z" fill="#3b4353"/></svg><div class="a" style="left:789px;top:97.5px;width:46px;height:22.5px;background:#0b0b0c"></div><svg class="a" style="left:793.5px;top:100.5px" width="5" height="7" viewBox="0 0 5 7"><path d="M2.500 6.500V1.200M.7 2.900 2.500 1l1.800 1.900" fill="none" stroke="#e9a566" stroke-width="1.100"/></svg><svg class="a" style="left:793.5px;top:110.5px" width="5" height="7" viewBox="0 0 5 7"><path d="M2.500 .5v5.300M.7 4.100 2.500 6l1.800-1.900" fill="none" stroke="#86d353" stroke-width="1.100"/></svg><div class="t" style="left:800.5px;top:104.0px;font-size:6.900px;color:#e9a566">2.8 MB/s</div><div class="t" style="left:800.5px;top:114.2px;font-size:6.900px;color:#86d353">0.6 KB/s</div></div><div class="a" style="left:839px;top:57.700px;width:11px;height:396px;background:#fcfcfc"></div><div class="a" style="left:841.800px;top:61.500px;width:0;height:0;border:2.200px solid transparent;border-bottom:3px solid #8a8a8a"></div><div class="a" style="left:841.800px;top:446.500px;width:0;height:0;border:2.200px solid transparent;border-top:3px solid #8a8a8a"></div><div class="a" style="left:841.500px;top:195.500px;width:4.500px;height:142px;background:#8d8d8d;border-radius:2.200px"></div><div class="a" style="left:0;top:456px;width:850px;height:5px;background:#1f282c"></div><div class="a" style="left:28px;top:456px;width:25px;height:5px;background:#676c6e"></div><div class="a" style="left:819px;top:457.500px;width:4px;height:2px;background:#8d9396;box-shadow:6px 0 #8d9396,11px 0 #8d9396,16px 0 #8d9396"></div><div class="win" style="top:461px;height:58px"><div class="a" style="left:0;top:0;width:850px;height:18px;background:#cdcdcd"></div><div class="a" style="left:5.5px;top:2px;width:13px;height:13px;border-radius:7px;background:radial-gradient(circle at 50% 88%,#efe9ea 0 26%,rgba(239,233,234,0) 40%),radial-gradient(circle at 62% 55%,#4f6475 0 18%,rgba(79,100,117,0) 34%),linear-gradient(#4a3d3b 0 40%,#8a7f80 60%,#d9d2d2 100%)"></div><svg class="a" style="left:29px;top:4px" width="10" height="10" viewBox="0 0 10 10"><rect x="1" y="2.500" width="6" height="6" rx="1.200" fill="none" stroke="#444" stroke-width=".8"/><path d="M3 2.500V2a1 1 0 0 1 1-1h4a1 1 0 0 1 1 1v4a1 1 0 0 1-1 1h-1" fill="none" stroke="#444" stroke-width=".8"/></svg><div class="a" style="left:48px;top:0;width:133px;height:18px;background:#f9f9f9;border-radius:4px 4px 0 0"></div><svg class="a" style="left:54.500px;top:4px" width="9" height="9" viewBox="0 0 9 9"><path d="M4.500 .8 8 2.600v3.800L4.500 8.200 1 6.400V2.600z" fill="#f5a95b"/><path d="M1 2.600 4.500 4.400 8 2.600M4.500 4.400v3.800" stroke="#fbd3a6" stroke-width=".6" fill="none"/></svg><div class="t" style="left:69px;top:8.800px;font-size:6.300px;color:#333">[10% ETA: 02:30] Stable Diffusion</div><svg class="a" style="left:169px;top:6px" width="6" height="6" viewBox="0 0 6 6"><path d="M.8.8l4.400 4.400M5.200.8.8 5.200" stroke="#222" stroke-width=".8"/></svg><svg class="a" style="left:187px;top:4.500px" width="8" height="8" viewBox="0 0 8 8"><path d="M4 .5v7M.5 4h7" stroke="#222" stroke-width=".8"/></svg><svg class="a" style="left:783px;top:4px" width="60" height="10" viewBox="0 0 60 10"><path d="M1 5h6" stroke="#333" stroke-width=".7"/><rect x="26" y="2.500" width="4.500" height="4.500" rx="1" fill="none" stroke="#333" stroke-width=".7"/><path d="M27.500 2.500V2a.8.8 0 0 1 .8-.8h3a.8.8 0 0 1 .8.8v3a.8.8 0 0 1-.8.8h-.8" fill="none" stroke="#333" stroke-width=".7"/><path d="M50.500 2l5.500 5.500M56 2l-5.500 5.500" stroke="#333" stroke-width=".7"/></svg><div class="a" style="left:0;top:18px;width:850px;height:20px;background:#f9f9f9"></div><svg class="a" style="left:10px;top:23px" width="10" height="9" viewBox="0 0 10 9"><path d="M9 4.500H1.500M4.500 1 1.200 4.500 4.500 8" fill="none" stroke="#c4c4c4" stroke-width=".9"/></svg><svg class="a" style="left:34px;top:22.500px" width="10" height="10" viewBox="0 0 10 10"><path d="M8.600 5A3.600 3.600 0 1 1 7.400 2.300" fill="none" stroke="#333" stroke-width=".9"/><path d="M7.600.6v2.100H5.500" fill="none" stroke="#333" stroke-width=".9"/></svg><div class="a" style="left:56px;top:19.500px;width:664px;height:17.500px;background:#fff;border-radius:8.700px"></div><svg class="a" style="left:65px;top:24px" width="8" height="8" viewBox="0 0 8 8"><circle cx="4" cy="4" r="3.300" fill="none" stroke="#666" stroke-width=".6"/><path d="M4 3.600v2.200M4 2.200v.6" stroke="#666" stroke-width=".7"/></svg><div class="t" style="left:82.500px;top:28.300px;font-size:7.400px;color:#222">127.0.0.1<span style="color:#777">:7860/?__theme=dark</span></div><div class="t" style="left:658px;top:28.500px;font-size:5.600px;color:#555">a<span class="z" style="width:1em">あ</span></div><div class="t" style="left:681px;top:28px;font-size:7px;color:#555">A<span style="font-size:4px;vertical-align:top">⁾</span></div><svg class="a" style="left:701.500px;top:23px" width="10" height="10" viewBox="0 0 10 10"><path d="M5 1l1.250 2.600 2.850.4-2.050 2 .5 2.800L5 7.450 2.450 8.800l.5-2.800L.9 4l2.850-.4z" fill="none" stroke="#444" stroke-width=".7" stroke-linejoin="round"/></svg><svg class="a" style="left:731px;top:22.500px" width="11" height="11" viewBox="0 0 11 11"><path d="M3.600 2.200h1.200a1.200 1.200 0 1 1 2.100 0h1.400v1.900a1.250 1.250 0 1 1 0 2.300v2H6.600a1.200 1.200 0 1 0-2.100 0H2.800V6.600a1.300 1.300 0 1 1 0-2.400V2.200z" fill="none" stroke="#333" stroke-width=".8"/></svg><div class="a" style="left:750.500px;top:23px;width:1px;height:9px;background:#d0d0d0"></div><svg class="a" style="left:757.500px;top:23px" width="11" height="10" viewBox="0 0 11 10"><rect x="1" y="1.500" width="9" height="7" rx="1.400" fill="none" stroke="#333" stroke-width=".8"/><path d="M5.500 1.500v7" stroke="#333" stroke-width=".8"/></svg><svg class="a" style="left:781px;top:22.500px" width="12" height="11" viewBox="0 0 12 11"><path d="M4.200 1.200l1.100 2.300 2.500.35-1.800 1.750.4 2.500-2.200-1.200L2 8.100l.4-2.500L.6 3.850l2.500-.35z" fill="none" stroke="#333" stroke-width=".8" stroke-linejoin="round"/><path d="M8.200 3.200h3M8.200 5.400h3M8.200 7.600h3" stroke="#333" stroke-width=".8"/></svg><svg class="a" style="left:807px;top:22.500px" width="10" height="11" viewBox="0 0 10 11"><path d="M5 1v6.500M2.200 5 5 7.800 7.800 5M1.500 9.600h7" fill="none" stroke="#333" stroke-width=".8"/></svg><div class="t" style="left:830.500px;top:25.500px;font-size:9px;color:#333;letter-spacing:.2px">…</div><div class="a" style="left:0;top:38px;width:850px;height:20px;background:#f9f9f9"></div><div class="a" style="left:0;top:38px;width:850px;height:19px"><div class="a" style="left:8.500px;top:5.500px;width:8px;height:8px;border-radius:4px;background:conic-gradient(#2b7de9,#35c1f1,#e94f4f,#2b7de9)"></div><div class="a" style="left:11px;top:8px;width:3px;height:3px;border-radius:2px;background:#fff"></div><div class="bm" style="left:21px"><span class="z" style="width:8em">讯飞星火认知大模</span>...</div><svg class="a" style="left:89px;top:5.500px" width="7" height="8" viewBox="0 0 7 8"><path d="M1 .6h3l2 2v4.800H1z" fill="none" stroke="#333" stroke-width=".7"/><path d="M4 .6v2h2" fill="none" stroke="#333" stroke-width=".7"/></svg><div class="bm" style="left:101px"><span class="z" style="width:6em">显示星号密码</span></div><svg class="a" style="left:151px;top:5.500px" width="7" height="8" viewBox="0 0 7 8"><path d="M1 .6h3l2 2v4.800H1z" fill="none" stroke="#333" stroke-width=".7"/><path d="M4 .6v2h2" fill="none" stroke="#333" stroke-width=".7"/></svg><div class="bm" style="left:163.500px"><span class="z" style="width:6em">解除网页限制</span></div><svg class="a" style="left:213.5px;top:5.500px" width="7" height="8" viewBox="0 0 7 8"><path d="M1 .6h3l2 2v4.800H1z" fill="none" stroke="#333" stroke-width=".7"/><path d="M4 .6v2h2" fill="none" stroke="#333" stroke-width=".7"/></svg><div class="bm" style="left:225.500px"><span class="z" style="width:6em">网页自由编辑</span></div><svg class="a" style="left:274px;top:5.500px" width="8" height="8" viewBox="0 0 8 8"><ellipse cx="4" cy="5.500" rx="2.200" ry="1.900" fill="#2932e1"/><circle cx="1.400" cy="3.600" r=".9" fill="#2932e1"/><circle cx="3" cy="1.700" r=".9" fill="#2932e1"/><circle cx="5" cy="1.700" r=".9" fill="#2932e1"/><circle cx="6.600" cy="3.600" r=".9" fill="#2932e1"/></svg><div class="bm" style="left:287px"><span class="z" style="width:9em">百度一下，你就知道</span></div><div class="a" style="left:355.500px;top:5.500px;width:7.500px;height:8px;background:#d8332a;border-radius:1px"></div><div class="a" style="left:357px;top:7px;width:4.500px;height:1px;background:#fff;box-shadow:0 2px #fff,0 4px #fff"></div><div class="bm" style="left:368px"><span class="z" style="width:4em">吾爱破解</span> - LCG - LS...</div><div class="a" style="left:441.500px;top:6px;width:6px;height:7px;background:#d8332a;border-radius:3px 1px 3px 1px;transform:rotate(20deg)"></div><div class="bm" style="left:453px"><span class="z" style="width:3em">剪破解</span>-Go<span class="z" style="width:2em">破解</span>|GoP...</div><div class="a" style="left:526.500px;top:5.500px;width:8px;height:8px;border-radius:4px;background:#e98a2b;border:1px solid #c86a12"></div><div class="bm" style="left:539px"><span class="z" style="width:4em">果核剥壳</span> - <span class="z" style="width:3em">互联网</span>...</div><div class="a" style="left:608px;top:6px;width:6px;height:7px;border-radius:2px;background:#2d9df0"></div><div class="a" style="left:609.500px;top:8px;width:3px;height:1px;background:#fff;box-shadow:0 2px #fff"></div><div class="bm" style="left:619.500px"><span class="z" style="width:6em">中国移动云盘</span>-<span class="z" style="width:2em">不限</span>...</div><div class="a" style="left:690px;top:5.500px;width:8px;height:8px;background:#c9463d"></div><div class="a" style="left:691px;top:6.500px;width:2.500px;height:2.500px;background:#fff;box-shadow:3.500px 0 #fff,0 3.500px #fff"></div><div class="bm" style="left:702px"><span class="z" style="width:4em">绿色软件</span>-<span class="z" style="width:4em">小刀娱乐</span>...</div><svg class="a" style="left:833px;top:5.500px" width="6" height="8" viewBox="0 0 6 8"><path d="M1.500 1 4.500 4 1.500 7" fill="none" stroke="#333" stroke-width=".8"/></svg></div></div><div class="page" style="top:518.7px;height:396.5px;border-radius:5px 0 0 5px"><div class="a" style="left:8.5px;top:-0.7px;width:1.0px;height:398px;background:#1a202d"></div><div class="a" style="left:820px;top:351.0px;width:1px;height:46.3px;background:#1a202d"></div><div class="a" style="left:15px;top:351.0px;width:1px;height:46.3px;background:#1a202d"></div><div class="a" style="left:827.5px;top:-0.7px;width:1.0px;height:398px;background:#232b3a"></div><div class="a" style="left:15px;top:-18.7px;width:621px;height:210.7px;border:1px solid #1b212d"></div><svg class="a" style="left:21.0px;top:7.3px" width="11" height="11" viewBox="0 0 11 11"><circle cx="5.500" cy="5.500" r="4.500" fill="none" stroke="#e5e7eb" stroke-width=".8"/><path d="M3.200 4.600 5.500 6.900 7.800 4.600" fill="none" stroke="#e5e7eb" stroke-width=".8"/></svg><div class="t" style="left:32.8px;top:13.1px;font-size:9.200px;font-weight:bold;color:#fff"><span class="z" style="width:3em">提示词</span></div><div class="t" style="left:65.5px;top:13.1px;font-size:7.300px;color:#e5e7eb">(5/75)</div><div class="a" style="left:106px;top:5.1px;width:35px;height:15.5px;background:#22252d;border-radius:2.500px"></div><div class="a" style="left:145.5px;top:5.1px;width:35.5px;height:15.5px;background:#22252d;border-radius:2.500px"></div><div class="a" style="left:185.5px;top:5.1px;width:18.0px;height:15.5px;background:#22252d;border-radius:2.500px"></div><div class="a" style="left:208.5px;top:5.1px;width:34.5px;height:15.5px;background:#22252d;border-radius:2.500px"></div><div class="a" style="left:248px;top:5.1px;width:18px;height:15.5px;background:#22252d;border-radius:2.500px"></div><svg class="a" style="left:110.8px;top:8.3px" width="9" height="9" viewBox="0 0 9 9"><circle cx="4.500" cy="4.500" r="3.700" stroke="#bcc1c9" stroke-width=".7" fill="none"/><ellipse cx="4.500" cy="4.500" rx="1.700" ry="3.700" stroke="#bcc1c9" stroke-width=".7" fill="none"/><path d="M.8 4.500h7.400" stroke="#bcc1c9" stroke-width=".7" fill="none"/></svg><svg class="a" style="left:127.2px;top:8.3px" width="9" height="9" viewBox="0 0 9 9"><circle cx="4.500" cy="4.500" r="1.300" stroke="#bcc1c9" stroke-width=".7" fill="none"/><path d="M3.700.9h1.600l.3 1.100.9.500 1.100-.3.800 1.400-.8.800v1l.8.800-.8 1.400-1.100-.3-.9.500-.3 1.100H3.700l-.3-1.100-.9-.5-1.100.3-.8-1.400.8-.8v-1l-.8-.8.8-1.400 1.100.3.900-.5z" stroke="#bcc1c9" stroke-width=".7" fill="none"/></svg><svg class="a" style="left:150.2px;top:8.3px" width="9" height="9" viewBox="0 0 9 9"><path d="M1.200 1h5.300v3.200M1.200 1v7h3" stroke="#bcc1c9" stroke-width=".7" fill="none"/><path d="M2.500 2.800h2.700M2.500 4.400h1.500" stroke="#bcc1c9" stroke-width=".7" fill="none"/><circle cx="6.400" cy="6.500" r="1.500" stroke="#bcc1c9" stroke-width=".7" fill="none"/></svg><svg class="a" style="left:166.8px;top:8.3px" width="9" height="9" viewBox="0 0 9 9"><rect x="1.200" y="1" width="6.600" height="7" rx=".8" stroke="#bcc1c9" stroke-width=".7" fill="none"/><circle cx="4.500" cy="3.600" r="1.100" stroke="#bcc1c9" stroke-width=".7" fill="none"/><path d="M3.400 4.500v2l1.100-.7 1.100.7v-2" stroke="#bcc1c9" stroke-width=".7" fill="none"/></svg><svg class="a" style="left:190.0px;top:8.3px" width="9" height="9" viewBox="0 0 9 9"><rect x=".8" y="1.500" width="7.400" height="6" rx=".7" stroke="#bcc1c9" stroke-width=".7" fill="none"/><path d="M4.500.5v8M2.200 3.300h1.100M2.200 4.800h1.100M2.200 6.200h1.100M5.700 3.300h1.100M5.700 4.800h1.100" stroke="#bcc1c9" stroke-width=".7" fill="none"/></svg><svg class="a" style="left:212.8px;top:8.3px" width="9" height="9" viewBox="0 0 9 9"><rect x="2.800" y="2.800" width="5.400" height="5.400" rx=".8" stroke="#bcc1c9" stroke-width=".7" fill="none"/><path d="M1 6V1.600A.6.600 0 0 1 1.600 1H6" stroke="#bcc1c9" stroke-width=".7" fill="none"/><circle cx="5.500" cy="5.500" r="1.300" stroke="#bcc1c9" stroke-width=".7" fill="none"/></svg><svg class="a" style="left:229.8px;top:8.3px" width="9" height="9" viewBox="0 0 9 9"><path d="M1.300 2.300h6.400M3.300 2.300V1.200h2.400v1.100M2 2.300l.4 5.800h4.200L7 2.300M3.700 3.800v2.900M5.300 3.800v2.900" stroke="#bcc1c9" stroke-width=".7" fill="none"/></svg><svg class="a" style="left:252.5px;top:8.3px" width="9" height="9" viewBox="0 0 9 9"><circle cx="4.500" cy="4.500" r="3.600" stroke="#bcc1c9" stroke-width=".7" fill="none"/><path d="M4.500.9c1.800 1 1.800 2.800 0 3.600s-1.800 2.600 0 3.600M1.100 3.300c1.600.8 2.900.2 3.400-2.400M7.900 5.700c-1.600-.8-2.900-.2-3.400 2.400" stroke="#bcc1c9" stroke-width=".7" fill="none"/></svg><div class="a" style="left:331.5px;top:4.8px;width:298.5px;height:13.6px;border:1px solid #1d222d;border-radius:2px"></div><div class="a" style="left:321.5px;top:8.0px;width:9.0px;height:9.0px;border-radius:2px;background:#2563eb"></div><svg class="a" style="left:321.5px;top:8.0px" width="9" height="9" viewBox="0 0 9 9"><path d="M2.200 4.700 3.900 6.300l3-3.700" fill="none" stroke="#fff" stroke-width="1.300"/></svg><div class="a" style="left:332.1px;top:6.8px;width:10.4px;height:10.8px;border:1px solid #d9dce1;border-left:1.800px solid #f3f4f6;border-radius:1.500px"></div><div class="t" style="left:346.5px;top:12.5px;font-size:7.850px;color:#6b7280"><span class="z" style="width:7em">请输入新关键词</span></div><div class="a" style="left:21.5px;top:26.3px;width:19.5px;height:14px;background:#8a4a13;border-radius:2.500px"></div><div class="c" style="left:31.3px;top:33.6px;font-size:7.200px;color:#f2b774">1girl</div><div class="c" style="left:45px;top:33.6px;font-size:8px;color:#e5e7eb">×</div><div class="a" style="left:53px;top:26.3px;width:20px;height:14px;background:#7c2445;border-radius:2.500px"></div><div class="c" style="left:63px;top:33.6px;font-size:7.200px;color:#f0a7c0">skirt</div><div class="c" style="left:77px;top:33.6px;font-size:8px;color:#e5e7eb">×</div><div class="t" style="left:22px;top:45.0px;font-size:5.800px;color:#4a5261"><span class="z" style="width:1em">㊥</span> 1<span class="z" style="width:2em">女孩</span></div><div class="t" style="left:54px;top:45.0px;font-size:5.800px;color:#4a5261"><span class="z" style="width:1em">㊥</span> <span class="z" style="width:2em">短裙</span></div><svg class="a" style="left:623.5px;top:39.5px" width="11" height="11" viewBox="0 0 11 11"><circle cx="5.500" cy="5.500" r="4.500" fill="none" stroke="#e5e7eb" stroke-width=".8"/><path d="M3.200 4.600 5.500 6.900 7.800 4.600" fill="none" stroke="#e5e7eb" stroke-width=".8"/></svg><div class="a" style="left:15px;top:52.0px;width:621px;height:17.0px;background:#2b2e36;border-radius:2.500px"></div><div class="ptab" style="left:15px;top:52.0px;width:47.5px;height:17px;line-height:17.500px;border-radius:2.500px 0 0 2.500px;"><span class="z" style="width:4em">收藏列表</span></div><div class="ptab" style="left:62.5px;top:52.0px;width:47.5px;height:17px;line-height:17.500px;border-left:1px solid #1c1f26;"><span class="z" style="width:4em">扩展模型</span></div><div class="ptab" style="left:110px;top:52.0px;width:31.5px;height:17px;line-height:17.500px;border-left:1px solid #1c1f26;"><span class="z" style="width:2em">人物</span></div><div class="ptab" style="left:141.5px;top:52.0px;width:31.5px;height:17px;line-height:17.500px;border-left:1px solid #1c1f26;"><span class="z" style="width:2em">服饰</span></div><div class="ptab" style="left:173px;top:52.0px;width:47px;height:17px;line-height:17.500px;background:#6b6b6b;border-left:1px solid #1c1f26;"><span class="z" style="width:4em">表情动作</span></div><div class="ptab" style="left:220px;top:52.0px;width:31.5px;height:17px;line-height:17.500px;border-left:1px solid #1c1f26;"><span class="z" style="width:2em">画面</span></div><div class="ptab" style="left:251.5px;top:52.0px;width:31.5px;height:17px;line-height:17.500px;border-left:1px solid #1c1f26;"><span class="z" style="width:2em">环境</span></div><div class="ptab" style="left:283px;top:52.0px;width:31.5px;height:17px;line-height:17.500px;border-left:1px solid #1c1f26;"><span class="z" style="width:2em">场景</span></div><div class="ptab" style="left:314.5px;top:52.0px;width:31.5px;height:17px;line-height:17.500px;border-left:1px solid #1c1f26;"><span class="z" style="width:2em">物品</span></div><div class="ptab" style="left:346px;top:52.0px;width:31.5px;height:17px;line-height:17.500px;border-left:1px solid #1c1f26;"><span class="z" style="width:2em">镜头</span></div><div class="ptab" style="left:377.5px;top:52.0px;width:31.5px;height:17px;line-height:17.500px;border-left:1px solid #1c1f26;"><span class="z" style="width:2em">汉服</span></div><div class="ptab" style="left:409px;top:52.0px;width:39px;height:17px;line-height:17.500px;border-left:1px solid #1c1f26;"><span class="z" style="width:3em">魔法系</span></div><div class="ptab" style="left:448px;top:52.0px;width:52px;height:17px;line-height:17.500px;border-left:1px solid #1c1f26;"><span class="z" style="width:5em">反向提示词</span></div><div class="a" style="left:18.5px;top:71.1px;width:568.5px;height:15.5px;background:#2b2e36;border-radius:2.500px"></div><div class="ptab" style="left:18.5px;top:71.1px;width:18.5px;height:15.500px;line-height:16px;font-size:7.900px"><span class="z" style="width:1em">笑</span></div><div class="ptab" style="left:37px;top:71.1px;width:19px;height:15.500px;line-height:16px;font-size:7.900px"><span class="z" style="width:1em">哭</span></div><div class="ptab" style="left:56px;top:71.1px;width:34px;height:15.500px;line-height:16px;font-size:7.900px"><span class="z" style="width:3em">不开心</span></div><div class="ptab" style="left:90px;top:71.1px;width:27px;height:15.500px;line-height:16px;font-size:7.900px"><span class="z" style="width:2em">藐视</span></div><div class="ptab" style="left:117px;top:71.1px;width:26.5px;height:15.500px;line-height:16px;font-size:7.900px"><span class="z" style="width:2em">生气</span></div><div class="ptab" style="left:143.5px;top:71.1px;width:42.0px;height:15.500px;line-height:16px;font-size:7.900px"><span class="z" style="width:4em">其他表情</span></div><div class="ptab" style="left:185.5px;top:71.1px;width:42.5px;height:15.500px;line-height:16px;font-size:7.900px"><span class="z" style="width:4em">基础动作</span></div><div class="ptab" style="left:228px;top:71.1px;width:42.5px;height:15.500px;line-height:16px;font-size:7.900px"><span class="z" style="width:4em">手部动作</span></div><div class="ptab" style="left:270.5px;top:71.1px;width:78.0px;height:15.500px;line-height:16px;font-size:7.900px"><span class="z" style="width:4em">手部动作</span>(<span class="z" style="width:4em">拿着某物</span>)</div><div class="ptab" style="left:348.5px;top:71.1px;width:78.0px;height:15.500px;line-height:16px;font-size:7.900px"><span class="z" style="width:4em">手部动作</span>(<span class="z" style="width:4em">放在某地</span>)</div><div class="ptab" style="left:426.5px;top:71.1px;width:77.5px;height:15.500px;line-height:16px;font-size:7.900px"><span class="z" style="width:4em">手部动作</span>(<span class="z" style="width:4em">抓着某物</span>)</div><div class="ptab" style="left:504px;top:71.1px;width:41.5px;height:15.500px;line-height:16px;font-size:7.900px"><span class="z" style="width:4em">腿部动作</span></div><div class="ptab" style="left:545.5px;top:71.1px;width:41.5px;height:15.500px;line-height:16px;font-size:7.900px"><span class="z" style="width:4em">其他动作</span></div><div class="a" style="left:18.5px;top:85.6px;width:18.5px;height:1.0px;background:#808080"></div><div class="a" style="left:185.5px;top:85.6px;width:42.5px;height:1.0px;background:#5f626a"></div><div class="card" style="left:20.60px;top:91.30px"><u><span class="z" style="width:2em">微笑</span></u><s>smile</s></div><div class="card" style="left:99.85px;top:91.30px"><u><span class="z" style="width:2em">大笑</span></u><s>laughing</s></div><div class="card" style="left:179.10px;top:91.30px"><u><span class="z" style="width:2em">开心</span></u><s>kind_smile</s></div><div class="card" style="left:258.35px;top:91.30px"><u><span class="z" style="width:4em">开心的笑</span>_:D <i style="display:inline-block;width:7px;height:7px;border-radius:4px;background:radial-gradient(circle at 50% 45%,#ffd95a 0 55%,#e9a21f 100%);vertical-align:-1px"></i></u><s>:d</s></div><div class="card" style="left:337.60px;top:91.30px"><u><span class="z" style="width:3em">眨眼笑</span>_:D</u><s>;d</s></div><div class="card" style="left:416.85px;top:91.30px"><u><span class="z" style="width:5em">露齿咧嘴笑</span></u><s>grin</s></div><div class="card" style="left:496.10px;top:91.30px"><u><span class="z" style="width:8em">被迫笑，咧嘴傻笑</span></u><s>teasing_smile</s></div><div class="card" style="left:20.60px;top:119.05px"><u><span class="z" style="width:5em">魅惑的微笑</span></u><s>seductive_smile</s></div><div class="card" style="left:99.85px;top:119.05px"><u><span class="z" style="width:2em">傻笑</span>,<span class="z" style="width:5em">自鸣得意的</span>...</u><s>smirk</s></div><div class="card" style="left:179.10px;top:119.05px"><u><span class="z" style="width:4em">咯咯傻笑</span></u><s>giggling</s></div><div class="card" style="left:258.35px;top:119.05px"><u><span class="z" style="width:4em">洋洋得意</span></u><s>smug</s></div><div class="card" style="left:337.60px;top:119.05px"><u><span class="z" style="width:4em">调皮的脸</span></u><s>naughty_face</s></div><div class="card" style="left:416.85px;top:119.05px"><u><span class="z" style="width:3em">邪恶笑</span></u><s>evil smile</s></div><div class="card" style="left:496.10px;top:119.05px"><u><span class="z" style="width:4em">疯狂的笑</span></u><s>crazy_smile</s></div><div class="card" style="left:20.60px;top:146.80px"><u><span class="z" style="width:2em">快乐</span>|<span class="z" style="width:2em">幸福</span></u><s>happy</s></div><div class="card" style="left:99.85px;top:146.80px"><u><span class="z" style="width:4em">生日快乐</span></u><s>happy_birthday</s></div><div class="card" style="left:179.10px;top:146.80px"><u><span class="z" style="width:5em">万圣节快乐</span></u><s>happy_halloween</s></div><div class="card" style="left:258.35px;top:146.80px"><u><span class="z" style="width:4em">新年快乐</span></u><s>happy_new_year</s></div><div class="card" style="left:337.60px;top:146.80px"><u><span class="z" style="width:5em">开心的眼泪</span></u><s>happy_tears</s></div><div class="card" style="left:416.85px;top:146.80px"><u><span class="z" style="width:5em">情人节快乐</span></u><s>happy_valentine</s></div><div class="t" style="left:18px;top:183.6px;font-size:7.600px;color:#e5e7eb"><span class="z" style="width:4em">标签颜色</span>:</div><div class="a" style="left:54px;top:178.3px;width:11px;height:11px;border:1px solid #d1d5db;border-radius:1.500px"></div><div class="a" style="left:67.7px;top:178.3px;width:11.0px;height:11px;border:1px solid #d1d5db;border-radius:1.500px"></div><div class="a" style="left:81.5px;top:178.3px;width:11.0px;height:11px;border:1px solid #d1d5db;border-radius:1.500px"></div><svg class="a" style="left:67.7px;top:178.3px" width="11" height="11" viewBox="0 0 11 11"><circle cx="5.500" cy="5.500" r="2.800" fill="none" stroke="#d1d5db" stroke-width=".8"/><circle cx="5.500" cy="5.500" r=".8" fill="#d1d5db"/></svg><svg class="a" style="left:81.5px;top:178.3px" width="11" height="11" viewBox="0 0 11 11"><path d="M2.800 4.200h5.400v4.300H2.800zM4 4.200V2.800h3v1.400M4 6.400h3" fill="none" stroke="#d1d5db" stroke-width=".8"/></svg><div class="t" style="left:399px;top:183.8px;font-size:5.150px;color:#e5e7eb"><span class="z" style="width:7em">提示词整合来源</span> <span class="z" style="width:4em">通过蚁词</span>(<span class="z" style="width:2em">知乎</span>)<span class="z" style="width:5em">、未知作者</span>(Google Drive)<span class="z" style="width:18em">、互联网等等，感谢这些作者的无私奉献</span>!</div><div class="a" style="left:15px;top:200.8px;width:621px;height:46.0px;background:#1f2937;border-radius:4.500px;border:1px solid #263040"></div><div class="t" style="left:21px;top:211.8px;font-size:7.400px;color:#525c6d"><span class="z" style="width:5em">反向提示词</span> <span style="font-size:6.800px">(<span class="z" style="width:1em">按</span> Ctrl+Enter <span class="z" style="width:1em">或</span> Alt+Enter <span class="z" style="width:4em">开始生成</span>)</span></div><div class="t" style="left:21px;top:223.3px;font-size:6.900px;color:#525c6d">Negative prompt</div><div class="a" style="left:600.5px;top:193.3px;width:27.5px;height:14px;background:#1f2937;border:1px solid #465063;border-radius:4.500px;box-shadow:0 0 0 1.500px #293242"></div><div class="c" style="left:614.3px;top:200.6px;font-size:7.200px;color:#e5e7eb">0/75</div><div class="a" style="left:15px;top:242.0px;width:621px;height:69.0px;border:1px solid #1b212d;border-top:none"></div><svg class="a" style="left:21.0px;top:252.5px" width="11" height="11" viewBox="0 0 11 11"><circle cx="5.500" cy="5.500" r="4.500" fill="none" stroke="#e5e7eb" stroke-width=".8"/><path d="M3.200 4.600 5.500 6.900 7.800 4.600" fill="none" stroke="#e5e7eb" stroke-width=".8"/></svg><div class="t" style="left:32.8px;top:258.3px;font-size:9.200px;font-weight:bold;color:#fff"><span class="z" style="width:3em">反向词</span></div><div class="t" style="left:65.5px;top:258.3px;font-size:7.300px;color:#e5e7eb">(0/75)</div><div class="a" style="left:106px;top:250.3px;width:35px;height:15.5px;background:#22252d;border-radius:2.500px"></div><div class="a" style="left:145.5px;top:250.3px;width:35.5px;height:15.5px;background:#22252d;border-radius:2.500px"></div><div class="a" style="left:185.5px;top:250.3px;width:18.0px;height:15.5px;background:#22252d;border-radius:2.500px"></div><div class="a" style="left:208.5px;top:250.3px;width:34.5px;height:15.5px;background:#22252d;border-radius:2.500px"></div><svg class="a" style="left:110.8px;top:253.5px" width="9" height="9" viewBox="0 0 9 9"><circle cx="4.500" cy="4.500" r="3.700" stroke="#bcc1c9" stroke-width=".7" fill="none"/><ellipse cx="4.500" cy="4.500" rx="1.700" ry="3.700" stroke="#bcc1c9" stroke-width=".7" fill="none"/><path d="M.8 4.500h7.400" stroke="#bcc1c9" stroke-width=".7" fill="none"/></svg><svg class="a" style="left:127.2px;top:253.5px" width="9" height="9" viewBox="0 0 9 9"><circle cx="4.500" cy="4.500" r="1.300" stroke="#bcc1c9" stroke-width=".7" fill="none"/><path d="M3.700.9h1.600l.3 1.100.9.500 1.100-.3.800 1.400-.8.800v1l.8.800-.8 1.400-1.100-.3-.9.500-.3 1.100H3.700l-.3-1.100-.9-.5-1.100.3-.8-1.400.8-.8v-1l-.8-.8.8-1.400 1.100.3.900-.5z" stroke="#bcc1c9" stroke-width=".7" fill="none"/></svg><svg class="a" style="left:150.2px;top:253.5px" width="9" height="9" viewBox="0 0 9 9"><path d="M1.200 1h5.300v3.200M1.200 1v7h3" stroke="#bcc1c9" stroke-width=".7" fill="none"/><path d="M2.500 2.800h2.700M2.500 4.400h1.500" stroke="#bcc1c9" stroke-width=".7" fill="none"/><circle cx="6.400" cy="6.500" r="1.500" stroke="#bcc1c9" stroke-width=".7" fill="none"/></svg><svg class="a" style="left:166.8px;top:253.5px" width="9" height="9" viewBox="0 0 9 9"><rect x="1.200" y="1" width="6.600" height="7" rx=".8" stroke="#bcc1c9" stroke-width=".7" fill="none"/><circle cx="4.500" cy="3.600" r="1.100" stroke="#bcc1c9" stroke-width=".7" fill="none"/><path d="M3.400 4.500v2l1.100-.7 1.100.7v-2" stroke="#bcc1c9" stroke-width=".7" fill="none"/></svg><svg class="a" style="left:190.0px;top:253.5px" width="9" height="9" viewBox="0 0 9 9"><rect x=".8" y="1.500" width="7.400" height="6" rx=".7" stroke="#bcc1c9" stroke-width=".7" fill="none"/><path d="M4.500.5v8M2.200 3.300h1.100M2.200 4.800h1.100M2.200 6.200h1.100M5.700 3.300h1.100M5.700 4.800h1.100" stroke="#bcc1c9" stroke-width=".7" fill="none"/></svg><svg class="a" style="left:212.8px;top:253.5px" width="9" height="9" viewBox="0 0 9 9"><rect x="2.800" y="2.800" width="5.400" height="5.400" rx=".8" stroke="#bcc1c9" stroke-width=".7" fill="none"/><path d="M1 6V1.600A.6.600 0 0 1 1.600 1H6" stroke="#bcc1c9" stroke-width=".7" fill="none"/><circle cx="5.500" cy="5.500" r="1.300" stroke="#bcc1c9" stroke-width=".7" fill="none"/></svg><svg class="a" style="left:229.8px;top:253.5px" width="9" height="9" viewBox="0 0 9 9"><path d="M1.300 2.300h6.400M3.300 2.300V1.200h2.400v1.100M2 2.300l.4 5.800h4.200L7 2.300M3.700 3.800v2.900M5.300 3.800v2.900" stroke="#bcc1c9" stroke-width=".7" fill="none"/></svg><div class="a" style="left:313.5px;top:250.0px;width:316.5px;height:13.6px;border:1px solid #1d222d;border-radius:2px"></div><div class="a" style="left:303.5px;top:253.2px;width:9.0px;height:9.0px;border-radius:2px;background:#2563eb"></div><svg class="a" style="left:303.5px;top:253.2px" width="9" height="9" viewBox="0 0 9 9"><path d="M2.200 4.700 3.900 6.300l3-3.700" fill="none" stroke="#fff" stroke-width="1.300"/></svg><div class="a" style="left:314.1px;top:252.0px;width:10.4px;height:10.8px;border:1px solid #d9dce1;border-left:1.800px solid #f3f4f6;border-radius:1.500px"></div><div class="t" style="left:328.5px;top:257.7px;font-size:7.850px;color:#6b7280"><span class="z" style="width:7em">请输入新关键词</span></div><svg class="a" style="left:623.1px;top:260.3px" width="11" height="11" viewBox="0 0 11 11"><circle cx="5.500" cy="5.500" r="4.500" fill="none" stroke="#e5e7eb" stroke-width=".8"/><path d="M3.200 4.600 5.500 6.900 7.800 4.600" fill="none" stroke="#e5e7eb" stroke-width=".8"/></svg><div class="a" style="left:15px;top:272.2px;width:621px;height:17.0px;background:#2b2e36;border-radius:2.500px"></div><div class="ptab" style="left:15px;top:272.2px;width:47.5px;height:17px;line-height:17.500px;background:#6b6b6b;border-radius:2.500px 0 0 2.500px;"><span class="z" style="width:4em">收藏列表</span></div><div class="ptab" style="left:62.5px;top:272.2px;width:47.5px;height:17px;line-height:17.500px;border-left:1px solid #1c1f26;"><span class="z" style="width:4em">扩展模型</span></div><div class="ptab" style="left:110px;top:272.2px;width:31.5px;height:17px;line-height:17.500px;border-left:1px solid #1c1f26;"><span class="z" style="width:2em">人物</span></div><div class="ptab" style="left:141.5px;top:272.2px;width:31.5px;height:17px;line-height:17.500px;border-left:1px solid #1c1f26;"><span class="z" style="width:2em">服饰</span></div><div class="ptab" style="left:173px;top:272.2px;width:47px;height:17px;line-height:17.500px;border-left:1px solid #1c1f26;"><span class="z" style="width:4em">表情动作</span></div><div class="ptab" style="left:220px;top:272.2px;width:31.5px;height:17px;line-height:17.500px;border-left:1px solid #1c1f26;"><span class="z" style="width:2em">画面</span></div><div class="ptab" style="left:251.5px;top:272.2px;width:31.5px;height:17px;line-height:17.500px;border-left:1px solid #1c1f26;"><span class="z" style="width:2em">环境</span></div><div class="ptab" style="left:283px;top:272.2px;width:31.5px;height:17px;line-height:17.500px;border-left:1px solid #1c1f26;"><span class="z" style="width:2em">场景</span></div><div class="ptab" style="left:314.5px;top:272.2px;width:31.5px;height:17px;line-height:17.500px;border-left:1px solid #1c1f26;"><span class="z" style="width:2em">物品</span></div><div class="ptab" style="left:346px;top:272.2px;width:31.5px;height:17px;line-height:17.500px;border-left:1px solid #1c1f26;"><span class="z" style="width:2em">镜头</span></div><div class="ptab" style="left:377.5px;top:272.2px;width:31.5px;height:17px;line-height:17.500px;border-left:1px solid #1c1f26;"><span class="z" style="width:2em">汉服</span></div><div class="ptab" style="left:409px;top:272.2px;width:39px;height:17px;line-height:17.500px;border-left:1px solid #1c1f26;"><span class="z" style="width:3em">魔法系</span></div><div class="ptab" style="left:448px;top:272.2px;width:52px;height:17px;line-height:17.500px;border-left:1px solid #1c1f26;"><span class="z" style="width:5em">反向提示词</span></div><div class="a" style="left:18px;top:291.0px;width:69px;height:15.5px;background:#2b2e36;border-radius:2.500px"></div><div class="a" style="left:18px;top:305.5px;width:34.5px;height:1.0px;background:#8b8b8b"></div><div class="c" style="left:35.5px;top:299.0px;font-size:7.800px;color:#e5e7eb"><span class="z" style="width:3em">文生图</span></div><div class="c" style="left:70px;top:299.0px;font-size:7.800px;color:#e5e7eb"><span class="z" style="width:3em">图生图</span></div><div class="a" style="left:15px;top:350.2px;width:805.5px;height:1.0px;background:#222938"></div><div class="a" style="left:15px;top:320.5px;width:36.5px;height:30.7px;border:1px solid #222938;border-bottom:1px solid #0b0f19;border-radius:5px 5px 0 0;background:#0b0f19"></div><div class="t" style="left:24px;top:336.7px;font-size:9.200px;color:#fff"><span class="z" style="width:2em">生成</span></div><div class="t" style="left:61px;top:336.7px;font-size:9px;color:#9aa1ad"><span class="z" style="width:3em">嵌入式</span> <span style="font-size:8.100px">(T.I. Embedding)</span></div><div class="t" style="left:168px;top:336.7px;font-size:9px;color:#9aa1ad"><span class="z" style="width:3em">超网络</span> <span style="font-size:8.400px">(Hypernetworks)</span></div><div class="t" style="left:277px;top:336.7px;font-size:9px;color:#9aa1ad"><span class="z" style="width:2em">模型</span></div><div class="t" style="left:313.5px;top:336.7px;font-size:9px;color:#9aa1ad"><span style="font-size:8.400px">Lora</span></div><div class="a" style="left:418px;top:356.3px;width:1px;height:41px;background:#1a202d"></div><div class="lbl" style="left:22px;top:362.6px"><span class="z" style="width:4em">采样方法</span> <span>(Sampler)</span></div><div class="a" style="left:22px;top:367.6px;width:193px;height:23.0px;background:#1f2937;border-radius:4.500px;border:1px solid #283141"></div><div class="t" style="left:32px;top:379.4px;font-size:6.800px;color:#f3f4f6">DPM++ 2M SDE Karras</div><svg class="a" style="left:194px;top:373.4px" width="12" height="12" viewBox="0 0 12 12"><polygon points="4.10,4.58 7.90,4.58 6.00,7.80" fill="#e5e7eb"/></svg><div class="lbl" style="left:220px;top:362.6px"><span class="z" style="width:4em">迭代步数</span> <span>(Steps)</span></div><div class="num" style="left:367px;top:356.1px;width:47.5px;height:14.0px;line-height:14.6px;">20</div><div class="trk" style="left:220px;top:374.55px;width:193.5px"><i style="width:27px"></i><b style="left:22.5px"></b></div><div class="a" style="left:22px;top:393.3px;width:392.5px;height:18px;border:1px solid #222938;border-radius:4.500px"></div><div class="a" style="left:643.6px;top:-3.7px;width:19.3px;height:24px;background:#404859;border-radius:4.500px"></div><div class="a" style="left:666.9px;top:-3.7px;width:19.3px;height:24px;background:#404859;border-radius:4.500px"></div><div class="a" style="left:690.1px;top:-3.7px;width:19.3px;height:24px;background:#404859;border-radius:4.500px"></div><div class="a" style="left:713.3px;top:-3.7px;width:19.3px;height:24px;background:#404859;border-radius:4.500px"></div><svg class="a" style="left:649.6px;top:6.6px" width="7.5" height="7.5" viewBox="0 0 9 9"><path d="M7.500 1.500 2 7M1.800 3.600v3.600h3.600" fill="none" stroke="#fff" stroke-width="1.500"/></svg><div class="a" style="left:672.9px;top:5.6px;width:7.3px;height:9.2px;border:1.300px solid #fff;border-radius:1.800px"></div><svg class="a" style="left:694.8px;top:5.3px" width="10" height="10" viewBox="0 0 10 10"><path d="M1.500 2.300h7M3.500 2.300V1.200h3v1.100" fill="none" stroke="#8f96a3" stroke-width=".9"/><path d="M2.200 3.200h5.600l-.5 5.800H2.700z" fill="#8f96a3"/></svg><svg class="a" style="left:718.5px;top:5.1px" width="9" height="11" viewBox="0 0 9 11"><rect x=".8" y="1.500" width="7.400" height="9" rx=".8" fill="#b9a57c"/><rect x="1.800" y="2.800" width="5.400" height="6.800" fill="#f4f1e8"/><rect x="2.800" y=".6" width="3.400" height="2" rx=".5" fill="#8e8e8e"/><path d="M2.800 5h3.400M2.800 6.500h3.400M2.800 8h2.400" stroke="#aaa" stroke-width=".5"/></svg><div class="a" style="left:643px;top:24.5px;width:153.6px;height:22.8px;background:#1f2937;border-radius:4.500px;border:1px solid #283141"></div><div class="a" style="left:766.5px;top:31.8px;width:9.0px;height:9.0px;border-radius:4.500px;background:#090a0d"></div><svg class="a" style="left:766.5px;top:31.8px" width="9" height="9" viewBox="0 0 9 9"><path d="M2.800 2.800l3.400 3.400M6.200 2.800 2.800 6.200" stroke="#fff" stroke-width="1"/></svg><svg class="a" style="left:775.5px;top:30.8px" width="12" height="12" viewBox="0 0 12 12"><polygon points="4.10,4.58 7.90,4.58 6.00,7.80" fill="#e5e7eb"/></svg><div class="a" style="left:801px;top:26.3px;width:19.6px;height:21px;background:#404859;border-radius:4.500px"></div><svg class="a" style="left:805px;top:31.3px" width="12" height="12" viewBox="0 0 12 12"><path d="M1.800 10.200 2.700 7.600 8.800 1.500 10.500 3.200 4.400 9.300z" fill="#f4b13c"/><path d="M2.700 7.600 8.800 1.500" stroke="#d23c2a" stroke-width="1"/><path d="M1.800 10.200l.9-2.600 1.700 1.700z" fill="#e8cfa4"/></svg><div class="a" style="left:789px;top:97.5px;width:46px;height:22.5px;background:#0b0b0c"></div><svg class="a" style="left:793.5px;top:100.5px" width="5" height="7" viewBox="0 0 5 7"><path d="M2.500 6.500V1.200M.7 2.900 2.500 1l1.800 1.900" fill="none" stroke="#e9a566" stroke-width="1.100"/></svg><svg class="a" style="left:793.5px;top:110.5px" width="5" height="7" viewBox="0 0 5 7"><path d="M2.500 .5v5.300M.7 4.100 2.500 6l1.800-1.900" fill="none" stroke="#86d353" stroke-width="1.100"/></svg><div class="t" style="left:800.5px;top:104.0px;font-size:6.900px;color:#e9a566">0.8 KB/s</div><div class="t" style="left:800.5px;top:114.2px;font-size:6.900px;color:#86d353">1.0 KB/s</div><div class="a" style="left:422px;top:359.3px;width:391px;height:52px;background:#121826;border:1px solid #1b2230"></div><div class="a" style="left:427px;top:360.3px;width:381px;height:51px;background:#0b0f19"></div><div class="a" style="left:422.5px;top:348.3px;width:390.8px;height:11.7px;background:#414859"></div><div class="a" style="left:422.5px;top:348.3px;width:38.2px;height:11.7px;background:#1263d9"></div><div class="t" style="left:426px;top:354.4px;font-size:7.200px;font-weight:bold;color:#fff">10% ETA: 02:39</div><div class="a" style="left:569.3px;top:361.3px;width:97px;height:40px;overflow:hidden;background:linear-gradient(90deg,#8f7a6d,#9a8475 25%,#a68d7c 55%,#a18b79 80%,#aa957f)"><div class="a" style="left:44px;top:10px;width:34px;height:30px;border-radius:15px;background:#bf9c89;filter:blur(5px)"></div><div class="a" style="left:0;top:0;width:26px;height:18px;background:#9d8a7c;filter:blur(5px)"></div></div></div><div class="a" style="left:839px;top:518.700px;width:11px;height:396.500px;background:#fcfcfc"></div><div class="a" style="left:841.800px;top:522.500px;width:0;height:0;border:2.200px solid transparent;border-bottom:3px solid #8a8a8a"></div><div class="a" style="left:841.800px;top:906.500px;width:0;height:0;border:2.200px solid transparent;border-top:3px solid #8a8a8a"></div><div class="a" style="left:841.500px;top:576.500px;width:4.500px;height:155px;background:#8d8d8d;border-radius:2.200px"></div><div class="a" style="left:0;top:917px;width:850px;height:4px;background:#1f282c"></div><div class="a" style="left:28px;top:917px;width:25px;height:4px;background:#676c6e"></div><div class="a" style="left:819px;top:918.500px;width:4px;height:2px;background:#8d9396;box-shadow:6px 0 #8d9396,11px 0 #8d9396,16px 0 #8d9396"></div></body></html>
